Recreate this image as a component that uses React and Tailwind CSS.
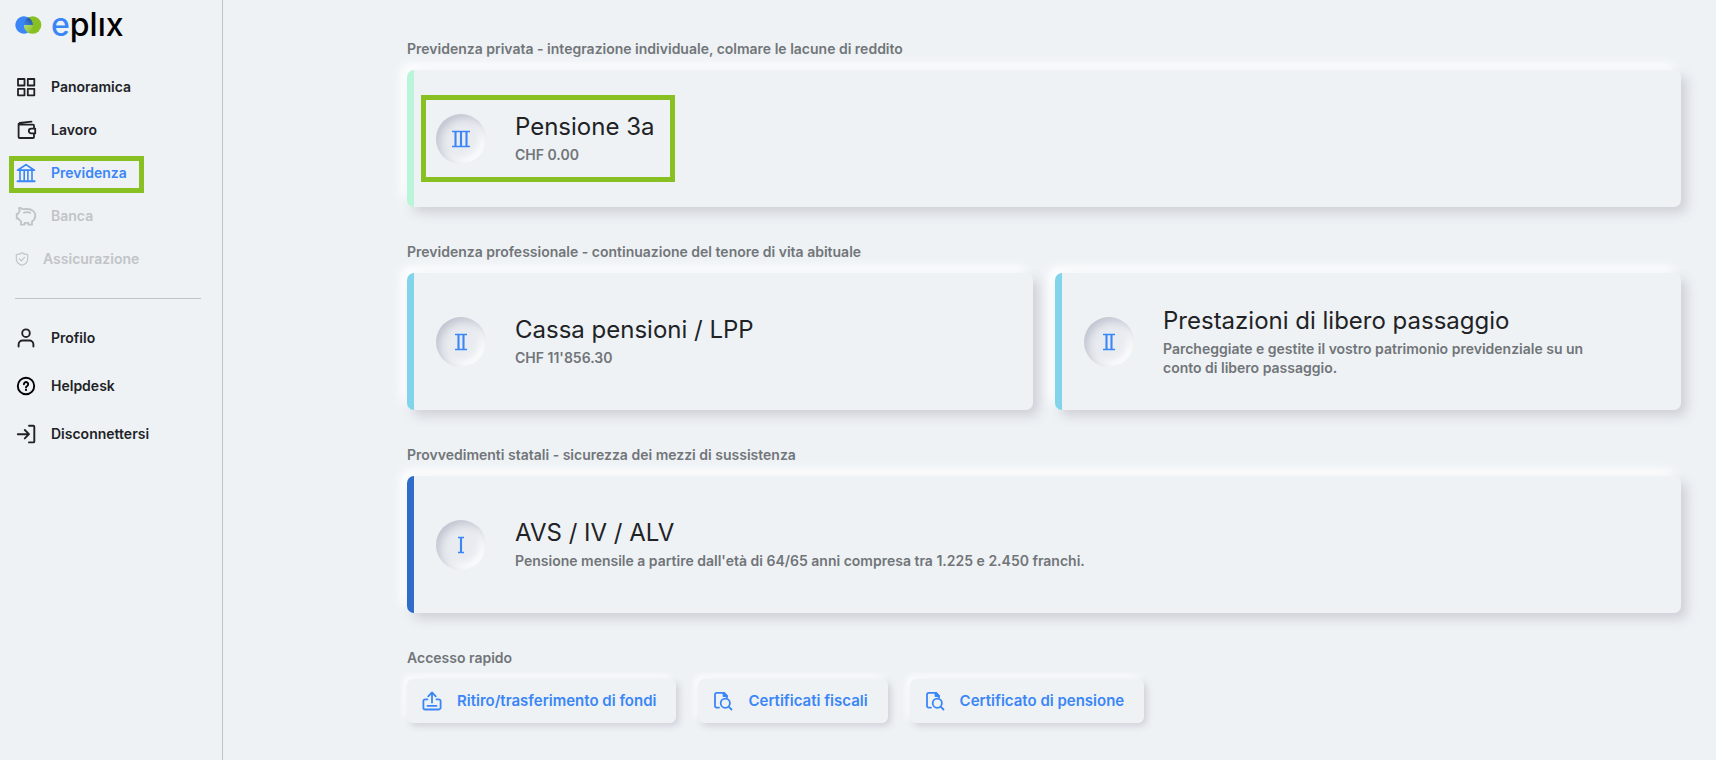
import React from "react";

const navText = "text-[14px] leading-5 font-semibold";

function Icon({ children, size = 24, width = 1.8, className = "" }) {
  return (
    <svg
      width={size}
      height={size}
      viewBox="0 0 24 24"
      fill="none"
      stroke="currentColor"
      strokeWidth={width}
      strokeLinecap="round"
      strokeLinejoin="round"
      aria-hidden="true"
      className={`shrink-0 ${className}`}
    >
      {children}
    </svg>
  );
}

const GridIcon = () => (
  <Icon>
    <rect x="4" y="4" width="6.5" height="6.5" />
    <rect x="13.8" y="4" width="6.5" height="6.5" />
    <rect x="4" y="13.8" width="6.5" height="6.5" />
    <rect x="13.8" y="13.8" width="6.5" height="6.5" />
  </Icon>
);

const WalletIcon = () => (
  <Icon>
    <path d="M20 10V7.6a1 1 0 0 0-1-1H5.2A1.2 1.2 0 0 1 5.6 5L17.5 3.6" />
    <path d="M4.6 6v13a1 1 0 0 0 1 1H19a1 1 0 0 0 1-1v-3.2" />
    <path d="M21.2 10.6h-4a2.4 2.4 0 0 0 0 4.8h4z" />
  </Icon>
);

const BankIcon = () => (
  <Icon width={1.7}>
    <path d="M3.6 9.2 12 3.6l8.4 5.6z" />
    <path d="M6 9.5v10M10.2 9.5v10M13.9 9.5v10M18 9.5v10" strokeWidth="1.6" />
    <path d="M3.6 20.3h17" strokeWidth="2" />
  </Icon>
);

const PiggyIcon = () => (
  <Icon width={1.8}>
    <path d="M8.300 5.200c-1-1-2.300-1.300-3.300-1.100l.6 3.300C4.800 8.300 4.300 9 4 10H2.700v4.500h1.700c.6 1.200 1.500 2.100 2.600 2.700v3.500h3.600v-1.900h3.800v1.900H18v-3.300c2-1.300 3.300-3.200 3.300-5.700 0-4-3.300-6.700-8.100-6.700-1.700 0-3.400 0-4.900.2z" />
    <path d="M10 8.700c2-.7 4.400-.7 6.200.1" />
  </Icon>
);

const ShieldIcon = () => (
  <Icon size={16} width={1.7}>
    <path d="M12 2.500c-2.500 1.800-5.200 2.600-8.500 2.700v6.300c0 5 3.500 8.300 8.500 10 5-1.700 8.500-5 8.500-10V5.200c-3.300-.1-6-.9-8.500-2.700z" />
    <path d="m8 11.800 2.900 2.900 5-5.200" />
  </Icon>
);

const UserIcon = () => (
  <Icon width={1.9}>
    <circle cx="12" cy="7.2" r="3.8" />
    <path d="M4.600 20.500v-2a4 4 0 0 1 4-4h6.800a4 4 0 0 1 4 4v2" />
  </Icon>
);

const HelpIcon = () => (
  <Icon width={1.9} className="text-black">
    <circle cx="12" cy="12" r="8.2" />
    <path d="M9.900 10.200a2.150 2.150 0 1 1 3.300 1.800c-.8.500-1.200.8-1.200 1.600" />
    <path d="M12 15.900v.1" strokeWidth="2.2" />
  </Icon>
);

const LogoutIcon = () => (
  <Icon width={1.9}>
    <path d="M3.800 12.200h11M10.800 8l4.200 4.200-4.200 4.200" />
    <path d="M15 3.800h4.300a1 1 0 0 1 1 1v14.600a1 1 0 0 1-1 1H15" />
  </Icon>
);

const UploadIcon = () => (
  <Icon>
    <path d="M12 13.500V3.800M8.200 7.300 12 3.500l3.800 3.800" />
    <path d="M7.500 10.300H5.200a1.800 1.800 0 0 0-1.800 1.800v6.600a1.800 1.800 0 0 0 1.800 1.800h13.600a1.800 1.800 0 0 0 1.800-1.800v-6.600a1.800 1.800 0 0 0-1.800-1.800h-2.300" />
    <path d="M7.500 16.900h9" />
  </Icon>
);

const FileSearchIcon = () => (
  <Icon>
    <path d="M8 18.600H5.500a1.500 1.500 0 0 1-1.500-1.500V5.400a1.500 1.500 0 0 1 1.500-1.500h7.700L16 7v1.500" />
    <path d="M12.500 3.900V7H16z" fill="currentColor" />
    <circle cx="14.300" cy="14.200" r="4.600" />
    <path d="m17.600 17.600 2.900 2.900" />
  </Icon>
);

const stems = { 1: [9], 2: [6.5, 11.5], 3: [3.5, 9, 14.5] };
const barInset = { 1: 6, 2: 3, 3: 0 };

function Pillars({ count }) {
  const inset = barInset[count];
  return (
    <svg width="18" height="18" viewBox="0 0 18 18" fill="none" stroke="#3b86f7" aria-hidden="true">
      <path d={`M${inset} 1.500H${18 - inset}M${inset} 16.500H${18 - inset}`} strokeWidth="1.7" />
      {stems[count].map((x) => (
        <path key={x} d={`M${x} 1.500V16.500`} strokeWidth="2.100" />
      ))}
    </svg>
  );
}

function Logo() {
  return (
    <a href="#" className="flex items-center gap-[9px]" aria-label="eplix">
      <svg width="27" height="18" viewBox="0 0 27 18" aria-hidden="true">
        <defs>
          <linearGradient id="wedge" x1="0" y1="1" x2="1" y2="0">
            <stop offset="0" stopColor="#3b86f7" />
            <stop offset="1" stopColor="#274a7c" />
          </linearGradient>
          <linearGradient id="leaf" x1="1" y1="1" x2="0" y2="0">
            <stop offset="0" stopColor="#88c022" />
            <stop offset="1" stopColor="#b5d878" />
          </linearGradient>
        </defs>
        <circle cx="17.6" cy="9" r="8.7" fill="#88c022" />
        <path d="M9 .3A8.700 8.700 0 1 0 13.300 16.600 8.700 8.700 0 0 1 9 9h8.700A8.700 8.700 0 0 0 9 .3z" fill="#3b86f7" />
        <path d="M9 9h8.700A8.700 8.700 0 0 0 13.300 1.400 8.700 8.700 0 0 0 9 9z" fill="url(#wedge)" />
        <path d="M9 9h8.700a8.700 8.700 0 0 1-4.400 7.600A8.700 8.700 0 0 1 9 9z" fill="url(#leaf)" />
      </svg>
      <span className="text-[32px] leading-8 font-medium text-black">
        <span className="text-[#3b86f7]">e</span>plıx
      </span>
    </a>
  );
}

function NavItem({ icon, label, tone = "text-[#212225]", height = "h-[43px]", gap = "gap-[13px]", current }) {
  return (
    <li>
      <a href="#" aria-current={current ? "page" : undefined} className={`relative flex items-center pl-[14px] ${height} ${gap} ${tone}`}>
        {current && <span className="absolute top-[5px] left-[9px] h-[37px] w-[135px] border-[5px] border-[#88c022]" />}
        {icon}
        <span className={navText}>{label}</span>
      </a>
    </li>
  );
}

function Card({ edge, pillars, title, text, marked }) {
  return (
    <a
      href="#"
      className={`flex min-h-[137px] flex-1 items-center rounded-[7px] border-l-[7px] bg-[#eef2f5] pr-[60px] pl-[22px] shadow-[6px_6px_12px_#cfd0d8,-6px_-6px_12px_#ffffff] ${edge}`}
    >
      <div className="relative flex items-center gap-[29px]">
        {marked && <span className="absolute -inset-y-[18px] -left-[15px] w-[254px] border-[5px] border-[#88c022]" />}
        <span className="flex size-[50px] shrink-0 items-center justify-center rounded-full bg-[#e8ebf0] shadow-[inset_4px_4px_9px_#c0c4cf,inset_-4px_-4px_9px_#ffffff]">
          <Pillars count={pillars} />
        </span>
        <div>
          <h3 className="text-[24px] leading-7 text-[#212225]">{title}</h3>
          <p className="mt-1 text-[14px] leading-[19px] font-semibold text-[#717579]">{text}</p>
        </div>
      </div>
    </a>
  );
}

function Section({ title, children }) {
  return (
    <section>
      <h2 className="mb-[11px] text-[14px] leading-5 font-semibold text-[#717579]">{title}</h2>
      <div className="flex gap-[22px]">{children}</div>
    </section>
  );
}

function QuickButton({ icon, label }) {
  return (
    <button
      type="button"
      className="flex h-11 items-center gap-[13px] rounded-md bg-[#eef2f5] pr-5 pl-[13px] text-[15px] leading-5 font-semibold text-[#3b86f7] shadow-[3px_3px_7px_#cfd0d8,-3px_-3px_7px_#ffffff]"
    >
      {icon}
      {label}
    </button>
  );
}

export default function App() {
  return (
    <div className="flex min-h-screen bg-[#eef2f5] font-['Inter','Liberation_Sans',sans-serif]">
      <aside className="w-[223px] shrink-0 border-r border-[#bfc3c7]">
        <div className="pt-[9px] pl-[15px]">
          <Logo />
        </div>
        <nav>
          <ul className="mt-6">
            <NavItem icon={<GridIcon />} label="Panoramica" />
            <NavItem icon={<WalletIcon />} label="Lavoro" />
            <NavItem icon={<BankIcon />} label="Previdenza" tone="text-[#3b86f7]" current />
            <NavItem icon={<PiggyIcon />} label="Banca" tone="text-[#c1c4c7]" />
            <NavItem icon={<ShieldIcon />} label="Assicurazione" tone="text-[#c1c4c7]" />
          </ul>
          <hr className="mt-[18px] mr-[21px] ml-[15px] border-[#bfc3c7]" />
          <ul className="mt-[15px]">
            <NavItem icon={<UserIcon />} label="Profilo" height="h-12" />
            <NavItem icon={<HelpIcon />} label="Helpdesk" height="h-12" />
            <NavItem icon={<LogoutIcon />} label="Disconnettersi" height="h-12" />
          </ul>
        </nav>
      </aside>

      <main className="flex min-w-0 flex-1 flex-col gap-[35px] pt-[39px] pr-[35px] pl-[184px]">
        <Section title="Previdenza privata - integrazione individuale, colmare le lacune di reddito">
          <Card edge="border-[#b9f5d8]" pillars={3} title="Pensione 3a" text="CHF 0.00" marked />
        </Section>
        <Section title="Previdenza professionale - continuazione del tenore di vita abituale">
          <Card edge="border-[#82d4ea]" pillars={2} title="Cassa pensioni / LPP" text="CHF 11'856.30" />
          <Card
            edge="border-[#82d4ea]"
            pillars={2}
            title="Prestazioni di libero passaggio"
            text="Parcheggiate e gestite il vostro patrimonio previdenziale su un conto di libero passaggio."
          />
        </Section>
        <Section title="Provvedimenti statali - sicurezza dei mezzi di sussistenza">
          <Card
            edge="border-[#2f6bc9]"
            pillars={1}
            title="AVS / IV / ALV"
            text="Pensione mensile a partire dall'età di 64/65 anni compresa tra 1.225 e 2.450 franchi."
          />
        </Section>
        <Section title="Accesso rapido">
          <QuickButton icon={<UploadIcon />} label="Ritiro/trasferimento di fondi" />
          <QuickButton icon={<FileSearchIcon />} label="Certificati fiscali" />
          <QuickButton icon={<FileSearchIcon />} label="Certificato di pensione" />
        </Section>
      </main>
    </div>
  );
}
